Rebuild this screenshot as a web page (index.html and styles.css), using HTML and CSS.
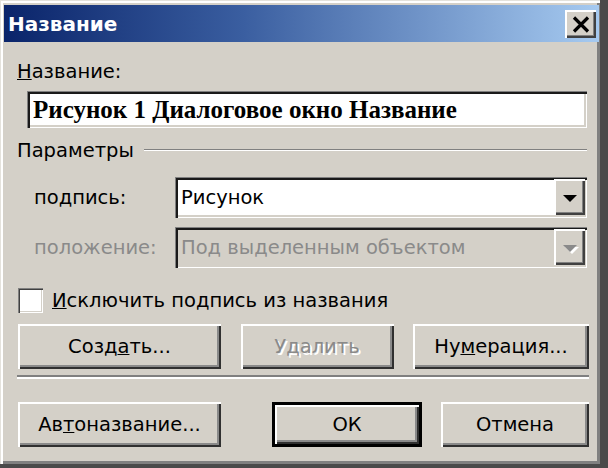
FILE: index.html
```html
<!DOCTYPE html>
<html lang="ru">
<head>
    <meta charset="UTF-8">
    <title>Название</title>
    <link rel="stylesheet" href="styles.css">
</head>
<body>
    <div class="window">
        <div class="titlebar">
            <span class="title">Название</span>
            <button class="close-btn" title="Закрыть">
                <svg width="18" height="17" viewBox="0 0 18 17">
                    <path d="M2 1.5 L16 15.5 M16 1.5 L2 15.5" stroke="#000" stroke-width="3.2" fill="none"/>
                </svg>
            </button>
        </div>

        <div class="dialog-body">
            <div class="field-label"><u>Н</u>азвание:</div>
            <div class="text-input">Рисунок 1 Диалоговое окно Название</div>

            <!-- Параметры group -->
            <div class="group-title">
                <span>Параметры</span>
                <span class="group-line"></span>
            </div>

            <div class="param-row">
                <span class="row-label">по<u>д</u>пись:</span>
                <div class="combo">
                    <span class="combo-text">Рисунок</span>
                    <span class="combo-btn"><span class="arrow"></span></span>
                </div>
            </div>

            <div class="param-row disabled">
                <span class="row-label">положение:</span>
                <div class="combo">
                    <span class="combo-text">Под выделенным объектом</span>
                    <span class="combo-btn"><span class="arrow"></span></span>
                </div>
            </div>

            <label class="check-row">
                <span class="check-box"></span>
                <span><u>И</u>сключить подпись из названия</span>
            </label>

            <div class="button-row">
                <button class="btn btn-wide">Созд<u>а</u>ть...</button>
                <button class="btn btn-mid" disabled>Удалить</button>
                <button class="btn btn-num">Ну<u>м</u>ерация...</button>
            </div>

            <div class="separator"></div>

            <div class="button-row">
                <button class="btn btn-wide">Ав<u>т</u>оназвание...</button>
                <button class="btn btn-ok">ОК</button>
                <button class="btn btn-cancel">Отмена</button>
            </div>
        </div>
    </div>
</body>
</html>
```

FILE: styles.css
```css
* {
    margin: 0;
    padding: 0;
    box-sizing: border-box;
}

body {
    background-color: #4a4a4a;
    font-family: "DejaVu Sans", Verdana, sans-serif;
    font-size: 19.5px;
    color: #000;
}

.window {
    width: 600px;
    height: 464px;
    background-color: #d4d0c8;
    padding: 5px 1px 0 4px;
    box-shadow: inset 1px 1px #e4e2dc, inset 3px 3px #ffffff, inset -3px -3px #808080;
}

/* Title bar */
.titlebar {
    height: 37px;
    display: flex;
    align-items: center;
    justify-content: space-between;
    padding: 0 3px 0 4px;
    background: linear-gradient(90deg, #0a246a 0%, #3a5ea0 40%, #a6caf0 100%);
}

.title {
    color: #fff;
    font-weight: bold;
    font-size: 20px;
}

.close-btn {
    width: 31px;
    height: 28px;
    margin-top: 1px;
    border: none;
    background-color: #d4d0c8;
    display: flex;
    align-items: center;
    justify-content: center;
    box-shadow: inset 2px 2px #ffffff, inset -2px -2px #404040, inset -3px -3px #808080;
}

/* Dialog content */
.dialog-body {
    padding: 0 10px 0 13px;
}

.field-label {
    margin-top: 18px;
    line-height: 24px;
}

.text-input {
    margin: 7px 2px 0 10px;
    height: 37px;
    background-color: #fff;
    padding: 3px 0 0 6px;
    font-family: "Liberation Serif", "Times New Roman", serif;
    font-weight: bold;
    font-size: 25px;
    line-height: 31px;
    white-space: nowrap;
    overflow: hidden;
    box-shadow: inset 1px 1px #808080, inset 3px 3px #1a1a1a, inset -1px -1px #ffffff, inset -3px -3px #d4d0c8;
}

.group-title {
    margin-top: 11px;
    display: flex;
    align-items: center;
    line-height: 24px;
}

.group-line {
    flex: 1;
    margin: 0 2px 2px 10px;
    border-top: 1px solid #808080;
    border-bottom: 1px solid #ffffff;
}

.param-row {
    display: flex;
    align-items: center;
    margin-top: 14px;
}

.param-row + .param-row {
    margin-top: 9px;
}

.row-label {
    width: 158px;
    padding-left: 17px;
}

.combo {
    flex: 1;
    height: 41px;
    margin-right: 2px;
    display: flex;
    align-items: center;
    justify-content: space-between;
    background-color: #fff;
    padding: 2px 2px 3px 6px;
    box-shadow: inset 1px 1px #808080, inset 3px 3px #1a1a1a, inset -1px -1px #ffffff, inset -3px -3px #d4d0c8;
}

.combo-text {
    white-space: nowrap;
}

.combo-btn {
    width: 31px;
    height: 100%;
    background-color: #d4d0c8;
    display: flex;
    align-items: center;
    justify-content: center;
    box-shadow: inset 2px 2px #ffffff, inset -2px -2px #404040, inset -3px -3px #808080;
}

.arrow {
    width: 0;
    height: 0;
    margin-top: 2px;
    border-left: 7px solid transparent;
    border-right: 7px solid transparent;
    border-top: 7px solid #000;
}

.disabled .row-label,
.disabled .combo-text {
    color: #8a8a8a;
}

.disabled .combo {
    background-color: #d4d0c8;
}

.disabled .arrow {
    border-top-color: #8a8a8a;
    filter: drop-shadow(2px 2px 0 #fff);
}

.check-row {
    margin-top: 20px;
    display: flex;
    align-items: center;
    gap: 9px;
    padding-left: 1px;
}

.check-box {
    width: 25px;
    height: 25px;
    background-color: #fff;
    box-shadow: inset 1px 1px #808080, inset 2px 2px #404040, inset -1px -1px #ffffff, inset -2px -2px #d4d0c8;
}

/* Buttons */
.button-row {
    display: flex;
    justify-content: space-between;
    margin-top: 11px;
    padding-left: 1px;
}

.btn {
    height: 45px;
    border: none;
    background-color: #d4d0c8;
    font-family: "DejaVu Sans", Verdana, sans-serif;
    font-size: 19.5px;
    color: #000;
    box-shadow: inset 2px 2px #ffffff, inset -2px -2px #303030, inset -4px -4px #8a8a8a;
}

.btn:disabled {
    color: #8a8a8a;
    text-shadow: 2px 2px 0 #ffffff;
}

.btn-wide {
    width: 203px;
}

.btn-mid {
    width: 153px;
}

.btn-num {
    width: 176px;
}

.btn-ok {
    width: 150px;
    margin-left: auto;
    margin-right: 19px;
    border: 3px solid #000;
}

.btn-cancel {
    width: 148px;
}

.separator {
    margin-top: 6px;
    height: 0;
    border-top: 2px solid #808080;
    border-bottom: 2px solid #ffffff;
}

.separator + .button-row {
    margin-top: 23px;
}
```
